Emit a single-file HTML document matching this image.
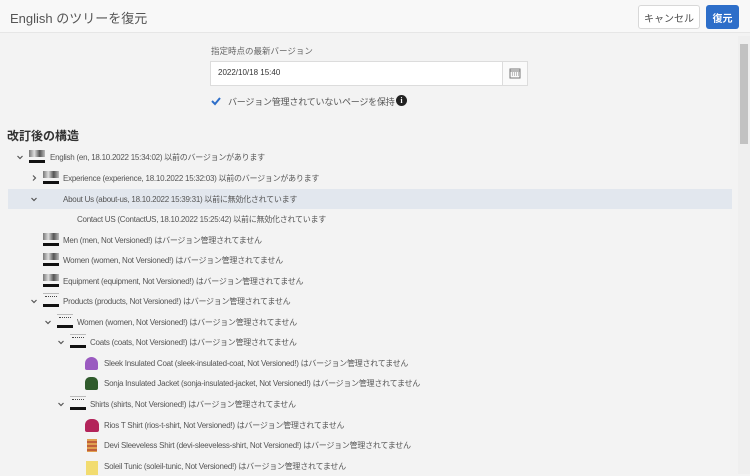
<!DOCTYPE html>
<html><head><meta charset="utf-8"><style>
*{box-sizing:border-box;margin:0;padding:0}
body{width:750px;height:474px;overflow:hidden;background:#f3f3f3;font-family:"Liberation Sans","Noto Sans CJK JP",sans-serif;color:#4b4b4b;position:relative}
.hdr{position:absolute;left:0;top:0;width:750px;height:33px;background:#f8f8f8;border-bottom:1px solid #e6e6e6}
.t{position:absolute;white-space:nowrap}
.btn{position:absolute;top:5px;height:24px;border-radius:3px;font-size:10px;display:flex;align-items:center;justify-content:center}
.row{position:absolute;left:0;height:20px;font-size:8px;letter-spacing:-0.25px;color:#555;white-space:nowrap}
.row span{position:absolute;top:5px}
.chev{position:absolute;top:3px;width:8px;height:8px}
.ic{position:absolute;top:2px;width:16px;height:16px}
.ic .a{position:absolute;left:0;top:1px;width:16px;height:7px;background:linear-gradient(90deg,#777,#ddd,#555,#bbb)}
.ic .b{position:absolute;left:0;top:11px;width:16px;height:3px;background:#111}
.ic .c{position:absolute;left:2px;top:3px;width:12px;height:1px;border-top:1px dotted #444}
.ic .d{position:absolute;left:0;top:0;width:16px;height:1px;background:#bbb}
</style></head><body>
<svg width="0" height="0" style="position:absolute"><defs>
<symbol id="dn" viewBox="0 0 8 8"><path d="M1.5 3l2.5 2.5 2.5-2.5" fill="none" stroke="#555" stroke-width="1.2"/></symbol>
<symbol id="rt" viewBox="0 0 8 8"><path d="M3 1.5l2.5 2.5-2.5 2.5" fill="none" stroke="#555" stroke-width="1.2"/></symbol>
</defs></svg>
<div class="hdr">
<div class="t" style="left:10px;top:8px;font-size:13px;color:#555">English のツリーを復元</div>
<div class="btn" style="left:638px;width:62px;background:#fff;border:1px solid #d8d8d8;color:#4b4b4b">キャンセル</div>
<div class="btn" style="left:706px;width:33px;background:#2d6ec9;color:#fff;font-weight:bold">復元</div>
</div>
<div style="position:absolute;left:738px;top:36px;width:12px;height:438px;background:#efefef"></div>
<div style="position:absolute;left:740px;top:44px;width:8px;height:100px;background:#c2c2c2"></div>
<div class="t" style="left:211px;top:45px;font-size:8.5px;color:#666">指定時点の最新バージョン</div>
<div style="position:absolute;left:210px;top:61px;width:318px;height:25px;background:#fff;border:1px solid #dcdcdc"></div>
<div style="position:absolute;left:502px;top:61px;width:26px;height:25px;border:1px solid #dcdcdc;background:#fafafa"></div>
<svg style="position:absolute;left:509px;top:67px" width="12" height="12" viewBox="0 0 12 12"><rect x="1" y="2" width="10" height="9" fill="none" stroke="#777"/><line x1="1" y1="4" x2="11" y2="4" stroke="#777"/><path d="M3 6h1M5 6h1M7 6h1M9 6h1M3 8h1M5 8h1M7 8h1M9 8h1" stroke="#888"/></svg>
<div class="t" style="left:218px;top:68px;font-size:8px;color:#333">2022/10/18 15:40</div>
<svg style="position:absolute;left:210px;top:95px" width="12" height="12" viewBox="0 0 12 12"><path d="M2 6l3 3 5-6" fill="none" stroke="#2d6ec9" stroke-width="2"/></svg>
<div class="t" style="left:228px;top:95px;font-size:9px;letter-spacing:-0.2px;color:#555">バージョン管理されていないページを保持</div>
<div style="position:absolute;left:396px;top:95px;width:11px;height:11px;border-radius:50%;background:#222;color:#fff;font-size:8px;font-weight:bold;text-align:center;line-height:11px;font-family:'Liberation Serif',serif">i</div>
<div class="t" style="left:7px;top:127px;font-size:12px;font-weight:bold;color:#333">改訂後の構造</div>
<div style="position:absolute;left:8px;top:189px;width:724px;height:20px;background:#e2e7ee"></div>

<div class="row" style="top:147px"><svg class="chev" style="left:16px;top:6px"><use href="#dn"/></svg><div class="ic" style="left:29px"><div class="a"></div><div class="b"></div></div><span style="left:50px">English (en, 18.10.2022 15:34:02) 以前のバージョンがあります</span></div>
<div class="row" style="top:168px"><svg class="chev" style="left:30px;top:6px"><use href="#rt"/></svg><div class="ic" style="left:43px"><div class="a"></div><div class="b"></div></div><span style="left:63px">Experience (experience, 18.10.2022 15:32:03) 以前のバージョンがあります</span></div>
<div class="row" style="top:189px"><svg class="chev" style="left:30px;top:6px"><use href="#dn"/></svg><span style="left:63px">About Us (about-us, 18.10.2022 15:39:31) 以前に無効化されています</span></div>
<div class="row" style="top:209px"><span style="left:77px">Contact US (ContactUS, 18.10.2022 15:25:42) 以前に無効化されています</span></div>
<div class="row" style="top:230px"><div class="ic" style="left:43px"><div class="a"></div><div class="b"></div></div><span style="left:63px">Men (men, Not Versioned!) はバージョン管理されてません</span></div>
<div class="row" style="top:250px"><div class="ic" style="left:43px"><div class="a"></div><div class="b"></div></div><span style="left:63px">Women (women, Not Versioned!) はバージョン管理されてません</span></div>
<div class="row" style="top:271px"><div class="ic" style="left:43px"><div class="a"></div><div class="b"></div></div><span style="left:63px">Equipment (equipment, Not Versioned!) はバージョン管理されてません</span></div>
<div class="row" style="top:291px"><svg class="chev" style="left:30px;top:6px"><use href="#dn"/></svg><div class="ic" style="left:43px"><div class="d"></div><div class="c"></div><div class="b"></div></div><span style="left:63px">Products (products, Not Versioned!) はバージョン管理されてません</span></div>
<div class="row" style="top:312px"><svg class="chev" style="left:44px;top:6px"><use href="#dn"/></svg><div class="ic" style="left:57px"><div class="d"></div><div class="c"></div><div class="b"></div></div><span style="left:77px">Women (women, Not Versioned!) はバージョン管理されてません</span></div>
<div class="row" style="top:332px"><svg class="chev" style="left:57px;top:6px"><use href="#dn"/></svg><div class="ic" style="left:70px"><div class="d"></div><div class="c"></div><div class="b"></div></div><span style="left:90px">Coats (coats, Not Versioned!) はバージョン管理されてません</span></div>
<div class="row" style="top:353px"><div class="ic" style="left:84px"><div style="position:absolute;left:1px;top:2px;width:13px;height:13px;border-radius:7px 7px 2px 2px;background:#9a5ac0"></div></div><span style="left:104px">Sleek Insulated Coat (sleek-insulated-coat, Not Versioned!) はバージョン管理されてません</span></div>
<div class="row" style="top:373px"><div class="ic" style="left:84px"><div style="position:absolute;left:1px;top:2px;width:13px;height:13px;border-radius:5px 5px 2px 2px;background:#2f5a2c"></div></div><span style="left:104px">Sonja Insulated Jacket (sonja-insulated-jacket, Not Versioned!) はバージョン管理されてません</span></div>
<div class="row" style="top:394px"><svg class="chev" style="left:57px;top:6px"><use href="#dn"/></svg><div class="ic" style="left:70px"><div class="d"></div><div class="c"></div><div class="b"></div></div><span style="left:90px">Shirts (shirts, Not Versioned!) はバージョン管理されてません</span></div>
<div class="row" style="top:415px"><div class="ic" style="left:84px"><div style="position:absolute;left:1px;top:2px;width:14px;height:13px;border-radius:6px 6px 2px 2px;background:#b3245a"></div></div><span style="left:104px">Rios T Shirt (rios-t-shirt, Not Versioned!) はバージョン管理されてません</span></div>
<div class="row" style="top:435px"><div class="ic" style="left:84px"><div style="position:absolute;left:3px;top:2px;width:10px;height:13px;background:repeating-linear-gradient(#e0a050 0 2px,#c0603a 2px 4px)"></div></div><span style="left:104px">Devi Sleeveless Shirt (devi-sleeveless-shirt, Not Versioned!) はバージョン管理されてません</span></div>
<div class="row" style="top:456px"><div class="ic" style="left:84px"><div style="position:absolute;left:2px;top:3px;width:12px;height:14px;background:#f2dc70"></div></div><span style="left:104px">Soleil Tunic (soleil-tunic, Not Versioned!) はバージョン管理されてません</span></div>
</body></html>
